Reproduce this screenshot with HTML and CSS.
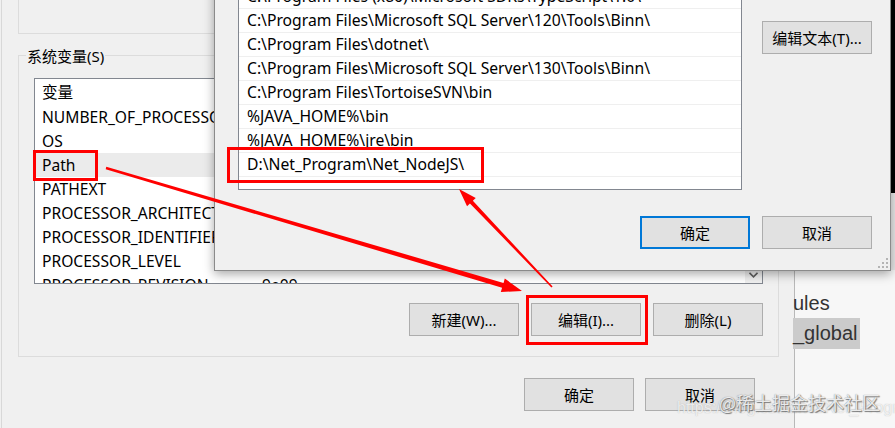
FILE: index.html
```html
<!DOCTYPE html>
<html>
<head>
<meta charset="utf-8">
<link rel="stylesheet" href="styles.css">
</head>
<body>
<div class="screen">
  <div class="win-back">
    <div class="prev-group"></div>
    <div class="group">
      <div class="legend">系统变量(S)</div>
      <div class="listview">
        <div class="lv-rows">
          <div class="lv-head"><span class="lv-name">变量</span></div>
          <div class="lv-row"><span class="lv-name">NUMBER_OF_PROCESSORS</span></div>
          <div class="lv-row"><span class="lv-name">OS</span></div>
          <div class="lv-row sel"><span class="lv-name">Path</span></div>
          <div class="lv-row"><span class="lv-name">PATHEXT</span></div>
          <div class="lv-row"><span class="lv-name">PROCESSOR_ARCHITECTURE</span></div>
          <div class="lv-row"><span class="lv-name">PROCESSOR_IDENTIFIER</span></div>
          <div class="lv-row"><span class="lv-name">PROCESSOR_LEVEL</span></div>
          <div class="lv-row"><span class="lv-name">PROCESSOR_REVISION</span><span>9e09</span></div>
        </div>
        <div class="lv-scroll">
          <div class="lv-arrow">
            <svg width="9" height="6" viewBox="0 0 9 6"><path d="M0.5 0.8 L4.5 4.8 L8.5 0.8" fill="none" stroke="#606060" stroke-width="1.6"/></svg>
          </div>
        </div>
      </div>
      <div class="btn-row">
        <button class="btn">新建(W)...</button>
        <button class="btn">编辑(I)...</button>
        <button class="btn">删除(L)</button>
      </div>
    </div>
    <div class="foot-row">
      <button class="btn">确定</button>
      <button class="btn">取消</button>
    </div>
  </div>
  <div class="side">
    <div class="side-line">ules</div>
    <div class="side-line"><span class="hl">_global</span></div>
  </div>

  <div class="dlg">
    <div class="dlg-top">
      <div class="f-list">
        <div class="f-row">C:\Program Files (x86)\Microsoft SDKs\TypeScript\1.0\</div>
        <div class="f-row">C:\Program Files\Microsoft SQL Server\120\Tools\Binn\</div>
        <div class="f-row">C:\Program Files\dotnet\</div>
        <div class="f-row">C:\Program Files\Microsoft SQL Server\130\Tools\Binn\</div>
        <div class="f-row">C:\Program Files\TortoiseSVN\bin</div>
        <div class="f-row">%JAVA_HOME%\bin</div>
        <div class="f-row">%JAVA_HOME%\jre\bin</div>
        <div class="f-row">D:\Net_Program\Net_NodeJS\</div>
      </div>
      <div class="side-col">
        <button class="btn">编辑文本(T)...</button>
      </div>
    </div>
    <div class="dlg-foot">
      <button class="btn primary">确定</button>
      <button class="btn">取消</button>
    </div>
    <svg class="grip" width="10" height="10" viewBox="0 0 10 10">
      <rect x="8" y="0" width="2" height="2" fill="#b4b4b4"/>
      <rect x="4" y="4" width="2" height="2" fill="#b4b4b4"/>
      <rect x="8" y="4" width="2" height="2" fill="#b4b4b4"/>
      <rect x="0" y="8" width="2" height="2" fill="#b4b4b4"/>
      <rect x="4" y="8" width="2" height="2" fill="#b4b4b4"/>
      <rect x="8" y="8" width="2" height="2" fill="#b4b4b4"/>
    </svg>
  </div>

  <div class="mark mark-path"></div>
  <div class="mark mark-node"></div>
  <div class="mark mark-edit"></div>

  <svg class="arrows" width="895" height="428" viewBox="0 0 895 428">
    <polygon fill="#f00" points="106.3,166.8 503.5,282.9 504.8,278.6 522,291 500.8,292.0 502.1,287.7 105.7,169.2"/>
    <polygon fill="#f00" points="552.6,286.45 472.85,200.7 475.75,197.9 459,189 467.05,206.2 469.95,203.4 551.4,287.55"/>
  </svg>

  <div class="wm-url">https://blog.csdn.net/Net_Program</div>
  <div class="wm">@稀土掘金技术社区</div>
</div>
</body>
</html>
```

FILE: styles.css
```css
* { box-sizing: border-box; }
html, body { margin: 0; padding: 0; }
body {
  width: 895px;
  height: 428px;
  overflow: hidden;
  background: #f0f0f0;
  font-family: "Noto Sans", "Noto Sans CJK SC", sans-serif;
  font-size: 15px;
  color: #000;
}
.screen {
  position: relative;
  display: flex;
  width: 895px;
  height: 428px;
  overflow: hidden;
}

/* back window */
.win-back {
  flex: none;
  width: 795px;
  height: 428px;
  padding-left: 18px;
  background-color: #f0f0f0;
  background-image: linear-gradient(to right, transparent 1px, #d8d8d8 1px, #d8d8d8 2px, transparent 2px);
  border-right: 1px solid #b8b8b8;
}
.prev-group {
  width: 300px;
  height: 34px;
  border-left: 1px solid #dcdcdc;
  border-bottom: 1px solid #dcdcdc;
}
.group {
  width: 761px;
  margin-top: 21px;
  border: 1px solid #dcdcdc;
  padding: 0 15px 20px;
}
.legend {
  width: fit-content;
  margin: -9px 0 0 -8px;
  padding: 0 1px;
  background: #f0f0f0;
  line-height: 18px;
}
.listview {
  margin-top: 13px;
  height: 206px;
  border: 1px solid #828790;
  background: #fff;
  display: grid;
  grid-template-columns: 1fr 17px;
  overflow: hidden;
}
.lv-rows { overflow: hidden; }
.lv-head, .lv-row {
  display: grid;
  grid-template-columns: 220px 1fr;
  padding-left: 7px;
  white-space: nowrap;
  font-size: 15.6px;
}
.lv-name { overflow: hidden; }
.lv-head { height: 26px; line-height: 26px; }
.lv-row { height: 24px; line-height: 24px; }
.lv-row.sel { background: #ebebeb; }
.lv-scroll {
  background: #f0f0f0;
  display: flex;
  flex-direction: column;
  justify-content: flex-end;
}
.lv-arrow {
  height: 17px;
  display: flex;
  align-items: center;
  justify-content: center;
}
.btn {
  width: 110px;
  height: 33px;
  padding: 0;
  margin: 0;
  background: #e1e1e1;
  border: 1px solid #adadad;
  font-family: "Noto Sans", "Noto Sans CJK SC", sans-serif;
  font-size: 15px;
  color: #000;
}
.btn.primary { border: 2px solid #0078d7; }
.btn-row {
  display: flex;
  justify-content: flex-end;
  gap: 12px;
  margin-top: 19px;
}
.foot-row {
  display: flex;
  justify-content: flex-end;
  gap: 11px;
  margin-top: 21px;
  padding-right: 39px;
}

/* right side window */
.side {
  flex: 1;
  background: linear-gradient(#000 0 193px, #e9e9e9 193px 270px, #f7f7f7 270px);
  padding-top: 288px;
  font-family: "Liberation Sans", Arial, sans-serif;
  font-size: 20px;
  line-height: 30px;
  color: #333;
  white-space: nowrap;
}
.side-line { margin-left: -2px; }
.hl {
  display: inline-block;
  background: #cbcbcb;
  line-height: 31px;
  padding-right: 2px;
}

/* front dialog */
.dlg {
  position: absolute;
  left: 214px;
  top: -30px;
  width: 677px;
  background: #f0f0f0;
  border: 1px solid #8a8a8a;
  box-shadow: 0 3px 10px rgba(0, 0, 0, 0.35);
  padding: 11px 18px 21px 23px;
}
.dlg-top {
  display: flex;
  justify-content: space-between;
  align-items: flex-start;
}
.f-list {
  width: 504px;
  height: 208px;
  background: #fff;
  border: 1px solid #828790;
  padding-top: 2px;
  overflow: hidden;
}
.f-row {
  height: 24px;
  line-height: 23px;
  border-bottom: 1px solid #efefef;
  padding-left: 8px;
  white-space: nowrap;
  font-size: 15.7px;
}
.side-col { padding-top: 39px; }
.dlg-foot {
  display: flex;
  justify-content: flex-end;
  gap: 12px;
  margin-top: 26px;
}
.grip {
  position: absolute;
  right: 2px;
  bottom: 2px;
}

/* annotations */
.mark {
  position: absolute;
  border: 3px solid #f00;
}
.mark-path { left: 33px; top: 150px; width: 65px; height: 31px; }
.mark-node { left: 227px; top: 147px; width: 257px; height: 36px; }
.mark-edit { left: 526px; top: 295px; width: 122px; height: 50px; }
.arrows {
  position: absolute;
  left: 0;
  top: 0;
  pointer-events: none;
}
.wm-url {
  position: absolute;
  left: 677px;
  top: 399px;
  font-family: "Liberation Sans", Arial, sans-serif;
  font-size: 16px;
  color: rgba(255, 255, 255, 0.75);
  text-shadow: 0 0 1px rgba(120, 120, 120, 0.5);
  white-space: nowrap;
}
.wm {
  position: absolute;
  left: 719px;
  top: 389px;
  font-family: "Noto Sans CJK SC", sans-serif;
  font-size: 18px;
  line-height: 26px;
  color: rgba(255, 255, 255, 0.85);
  text-shadow: 1px 1px 1px rgba(90, 90, 90, 0.8), 0 0 1px rgba(90, 90, 90, 0.8);
  white-space: nowrap;
}
```
